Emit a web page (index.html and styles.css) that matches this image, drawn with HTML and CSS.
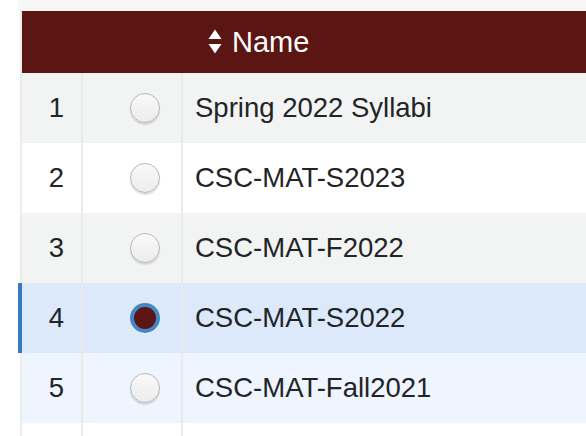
FILE: index.html
```html
<!DOCTYPE html>
<html>
<head>
<meta charset="utf-8">
<link rel="stylesheet" href="styles.css">
</head>
<body>
<div class="page">
  <div class="topbar"></div>
  <div class="grid">
    <div class="head">
      <div class="cell c-num"></div>
      <div class="cell c-sel"></div>
      <div class="cell c-name head-name">
        <svg class="sort" width="14" height="26" viewBox="0 0 14 26"><path d="M7 0.5 L13.5 10 L0.5 10 Z" fill="#fff"/><path d="M0.5 15 L13.5 15 L7 24.5 Z" fill="#fff"/></svg>
        <span>Name</span>
      </div>
    </div>
    <div class="row odd">
      <div class="cell c-num">1</div>
      <div class="cell c-sel"><span class="radio"></span></div>
      <div class="cell c-name">Spring 2022 Syllabi</div>
    </div>
    <div class="row">
      <div class="cell c-num">2</div>
      <div class="cell c-sel"><span class="radio"></span></div>
      <div class="cell c-name">CSC-MAT-S2023</div>
    </div>
    <div class="row odd">
      <div class="cell c-num">3</div>
      <div class="cell c-sel"><span class="radio"></span></div>
      <div class="cell c-name">CSC-MAT-F2022</div>
    </div>
    <div class="row selected">
      <div class="cell c-num">4</div>
      <div class="cell c-sel"><span class="radio checked"></span></div>
      <div class="cell c-name">CSC-MAT-S2022</div>
    </div>
    <div class="row hover">
      <div class="cell c-num">5</div>
      <div class="cell c-sel"><span class="radio"></span></div>
      <div class="cell c-name">CSC-MAT-Fall2021</div>
    </div>
    <div class="row">
      <div class="cell c-num"></div>
      <div class="cell c-sel"></div>
      <div class="cell c-name"></div>
    </div>
  </div>
</div>
</body>
</html>
```
FILE: styles.css
```css
html, body {
  margin: 0;
  padding: 0;
  background: #ffffff;
}
body {
  font-family: "Liberation Sans", Arial, sans-serif;
  color: #222426;
  overflow: hidden;
}
.page {
  width: 586px;
  height: 436px;
  overflow: hidden;
}
.topbar {
  height: 11px;
  margin-left: 18px;
  background: #f7f7f7;
}
.grid {
  margin-left: 20px;
  border-left: 2px solid #ebeded;
  width: 564px;
  position: relative;
}
.head {
  display: flex;
  height: 62px;
  background: #5b1513;
  color: #ffffff;
}
.row {
  display: flex;
  height: 70px;
  background: #ffffff;
  position: relative;
}
.row.odd { background: #f2f3f3; }
.row.selected { background: #dce9fb; }
.row.hover { background: #eef5fe; }
.row.selected::before {
  content: "";
  position: absolute;
  left: -4px;
  top: 0;
  bottom: 0;
  width: 4px;
  background: #3978bd;
}
.cell {
  display: flex;
  align-items: center;
  font-size: 27.5px;
}
.c-num {
  width: 61px;
  justify-content: center;
  padding-left: 10px;
  box-sizing: border-box;
}
.c-sel {
  width: 100px;
  justify-content: center;
  padding-left: 26px;
  box-sizing: border-box;
}
.row .c-num,
.row .c-sel {
  border-right: 2px solid #e8e9e9;
}
.head .c-num,
.head .c-sel {
  border-right: 2px solid transparent;
}
.c-name {
  flex: 1;
  padding-left: 12px;
}
.head-name {
  font-size: 29px;
  padding-left: 25px;
  gap: 10px;
}
.sort {
  display: block;
}
.radio {
  width: 30px;
  height: 30px;
  border-radius: 50%;
  box-sizing: border-box;
  border: 1.5px solid #b7b7b7;
  background: linear-gradient(#fafafa, #ececec);
  box-shadow: 0 2px 1px rgba(0,0,0,0.12);
}
.radio.checked {
  border: 4px solid #4586c6;
  background: #5b1513;
  box-shadow: 0 1px 1px rgba(255,255,255,0.6);
}
```
